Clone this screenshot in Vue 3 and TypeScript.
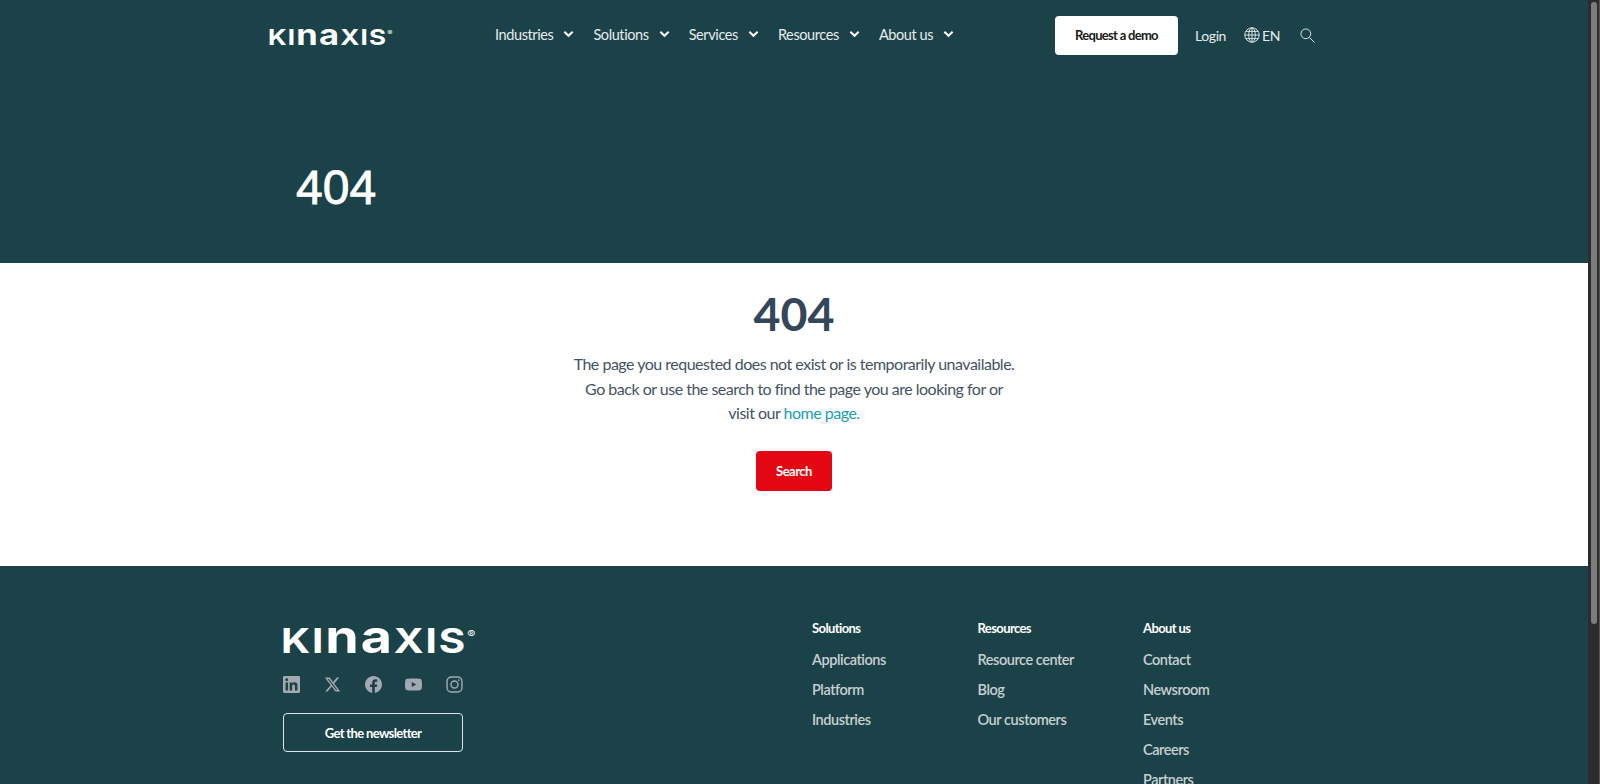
<script setup lang="ts">
interface NavItem {
  label: string
}

interface FooterColumn {
  title: string
  links: string[]
}

const navItems: NavItem[] = [
  { label: 'Industries' },
  { label: 'Solutions' },
  { label: 'Services' },
  { label: 'Resources' },
  { label: 'About us' },
]

const footerColumns: FooterColumn[] = [
  { title: 'Solutions', links: ['Applications', 'Platform', 'Industries'] },
  { title: 'Resources', links: ['Resource center', 'Blog', 'Our customers'] },
  { title: 'About us', links: ['Contact', 'Newsroom', 'Events', 'Careers', 'Partners'] },
]
</script>

<template>
  <div class="page">
    <section class="hero">
      <header class="wrap topbar">
        <a class="logo logo-small" href="#">
          <span class="cap">KI</span><span class="low">na</span><span class="cap">XIS</span><sup class="reg">®</sup>
        </a>
        <nav class="nav">
          <a v-for="item in navItems" :key="item.label" class="nav-item" href="#">
            {{ item.label }}
            <svg class="chevron" viewBox="0 0 12 8" width="11" height="8">
              <path d="M1.5 1.5 6 6l4.5-4.5" fill="none" stroke="currentColor" stroke-width="2.2" />
            </svg>
          </a>
        </nav>
        <div class="actions">
          <a class="demo" href="#">Request a demo</a>
          <a class="login" href="#">Login</a>
          <a class="lang" href="#">
            <svg viewBox="0 0 16 16" width="16" height="16" fill="none" stroke="currentColor" stroke-width="0.9">
              <circle cx="8" cy="8" r="7.2" />
              <ellipse cx="8" cy="8" rx="3.3" ry="7.2" />
              <path d="M8 .8v14.4M.8 8h14.4M1.8 4.4h12.4M1.8 11.6h12.4" />
            </svg>
            EN
          </a>
          <a class="search-icon" href="#" aria-label="Search">
            <svg viewBox="0 0 16 16" width="15" height="15" fill="none" stroke="currentColor" stroke-width="1">
              <circle cx="6.2" cy="6.2" r="5.2" />
              <path d="m10 10 5.5 5.5" />
            </svg>
          </a>
        </div>
      </header>
      <div class="wrap">
        <h1 class="hero-title">404</h1>
      </div>
    </section>

    <main class="notfound">
      <h2>404</h2>
      <p>
        The page you requested does not exist or is temporarily unavailable.<br>
        Go back or use the search to find the page you are looking for or<br>
        visit our <a href="#">home page.</a>
      </p>
      <a class="search-btn" href="#">Search</a>
    </main>

    <footer class="footer">
      <div class="wrap footer-inner">
        <div class="brand">
          <a class="logo logo-large" href="#">
            <span class="cap">KI</span><span class="low">na</span><span class="cap">XIS</span><sup class="reg">®</sup>
          </a>
          <div class="social">
            <svg viewBox="0 0 24 24" width="17" height="17" fill="currentColor">
              <path d="M20.447 20.452h-3.554v-5.569c0-1.328-.027-3.037-1.852-3.037-1.853 0-2.136 1.445-2.136 2.939v5.667H9.351V9h3.414v1.561h.046c.477-.9 1.637-1.85 3.37-1.85 3.601 0 4.267 2.37 4.267 5.455v6.286zM5.337 7.433c-1.144 0-2.063-.926-2.063-2.065 0-1.138.92-2.063 2.063-2.063 1.14 0 2.064.925 2.064 2.063 0 1.139-.925 2.065-2.064 2.065zm1.782 13.019H3.555V9h3.564v11.452zM22.225 0H1.771C.792 0 0 .774 0 1.729v20.542C0 23.227.792 24 1.771 24h20.451C23.2 24 24 23.227 24 22.271V1.729C24 .774 23.2 0 22.222 0h.003z" />
            </svg>
            <svg viewBox="0 0 24 24" width="17" height="17" fill="currentColor">
              <path d="M18.244 2.25h3.308l-7.227 8.26 8.502 11.24H16.17l-5.214-6.817L4.99 21.75H1.68l7.73-8.835L1.254 2.25H8.08l4.713 6.231zm-1.161 17.52h1.833L7.084 4.126H5.117z" />
            </svg>
            <svg viewBox="0 0 24 24" width="17" height="17" fill="currentColor">
              <path d="M24 12.073c0-6.627-5.373-12-12-12s-12 5.373-12 12c0 5.99 4.388 10.954 10.125 11.854v-8.385H7.078v-3.47h3.047V9.43c0-3.007 1.792-4.669 4.533-4.669 1.312 0 2.686.235 2.686.235v2.953H15.83c-1.491 0-1.956.925-1.956 1.874v2.25h3.328l-.532 3.47h-2.796v8.385C19.612 23.027 24 18.062 24 12.073z" />
            </svg>
            <svg viewBox="0 0 24 24" width="17" height="17" fill="currentColor">
              <path d="M23.498 6.186a3.016 3.016 0 0 0-2.122-2.136C19.505 3.545 12 3.545 12 3.545s-7.505 0-9.377.505A3.017 3.017 0 0 0 .502 6.186C0 8.07 0 12 0 12s0 3.93.502 5.814a3.016 3.016 0 0 0 2.122 2.136c1.871.505 9.376.505 9.376.505s7.505 0 9.377-.505a3.015 3.015 0 0 0 2.122-2.136C24 15.93 24 12 24 12s0-3.93-.502-5.814zM9.545 15.568V8.432L15.818 12l-6.273 3.568z" />
            </svg>
            <svg viewBox="0 0 24 24" width="17" height="17" fill="none" stroke="currentColor" stroke-width="2">
              <rect x="1.5" y="1.5" width="21" height="21" rx="6" />
              <circle cx="12" cy="12" r="5" />
              <circle cx="18.2" cy="5.8" r="1.2" fill="currentColor" stroke="none" />
            </svg>
          </div>
          <a class="newsletter" href="#">Get the newsletter</a>
        </div>
        <div class="columns">
          <div v-for="col in footerColumns" :key="col.title" class="column">
            <h3>{{ col.title }}</h3>
            <a v-for="link in col.links" :key="link" href="#">{{ link }}</a>
          </div>
        </div>
      </div>
    </footer>

    <div class="scrollbar">
      <div class="scrollbar-thumb" />
    </div>
  </div>
</template>

<style scoped>
.page {
  position: relative;
  box-sizing: border-box;
  height: 100vh;
  padding-right: 12px;
  overflow: hidden;
  font-family: Lato, "Liberation Sans", sans-serif;
  color: #445364;
}

.scrollbar {
  position: absolute;
  top: 0;
  right: 0;
  bottom: 0;
  box-sizing: border-box;
  width: 12px;
  padding: 2px 2px 0 3px;
  background: #2c2c2c;
  border-right: 1px solid #555;
}

.scrollbar-thumb {
  height: 622px;
  border-radius: 4px;
  background: #7c7c7c;
}

a {
  color: inherit;
  text-decoration: none;
}

.wrap {
  width: 1048px;
  margin: 0 auto;
}

.hero {
  height: 263px;
  background: #1b4249;
  color: #fff;
}

.topbar {
  display: flex;
  align-items: center;
  height: 70px;
}

.logo {
  display: inline-block;
  font-family: Inter, sans-serif;
  font-weight: 700;
  line-height: 1;
  color: #fff;
  white-space: nowrap;
  transform-origin: left center;
}

.logo .low {
  font-size: 1.33em;
}

.logo .reg {
  font-size: 0.3em;
  font-weight: 400;
  vertical-align: 1.5em;
  line-height: 0;
}

.logo-small {
  font-size: 22px;
  letter-spacing: 1px;
  margin-left: -2px;
  transform: scaleX(1.18);
}

.logo-large {
  font-size: 34px;
  letter-spacing: 1.6px;
  margin-left: -2px;
  transform: scaleX(1.19);
}

.topbar .logo {
  width: 227px;
  flex: none;
}

.nav {
  display: flex;
  gap: 19px;
  margin-top: -2px;
}

.nav-item {
  display: flex;
  align-items: center;
  gap: 10px;
  font-size: 14.5px;
  letter-spacing: -0.4px;
  color: #e6ecec;
}

.chevron {
  color: #fff;
}

.actions {
  display: flex;
  align-items: center;
  margin-left: auto;
  color: #e6ecec;
  font-size: 14px;
  letter-spacing: -0.4px;
}

.demo {
  display: flex;
  align-items: center;
  justify-content: center;
  width: 123px;
  height: 39px;
  border-radius: 4px;
  background: #fff;
  color: #1a1a1a;
  font-size: 13px;
  font-weight: 700;
  letter-spacing: -0.7px;
}

.login {
  margin-left: 17px;
}

.lang {
  display: flex;
  align-items: center;
  gap: 2px;
  margin-left: 18px;
}

.search-icon {
  display: flex;
  margin-left: 20px;
  margin-right: 3px;
}

.hero-title {
  margin: 91px 0 0;
  padding-left: 26px;
  font-family: "Liberation Sans", sans-serif;
  font-size: 48px;
  font-weight: 400;
  line-height: 54px;
  -webkit-text-stroke: 0.8px #fff;
}

.notfound {
  display: flex;
  flex-direction: column;
  align-items: center;
  height: 302px;
  background: #fff;
}

.notfound h2 {
  margin: 21px 0 0;
  font-size: 46.5px;
  font-weight: 700;
  line-height: 58px;
  color: #34475a;
}

.notfound p {
  margin: 10px 0 0;
  font-size: 16px;
  letter-spacing: -0.5px;
  line-height: 24.5px;
  text-align: center;
}

.notfound p a {
  color: #1a9dbb;
}

.search-btn {
  display: flex;
  align-items: center;
  justify-content: center;
  width: 76px;
  height: 40px;
  margin-top: 25px;
  border-radius: 4px;
  background: #e30613;
  color: #fff;
  font-size: 13px;
  font-weight: 700;
  letter-spacing: -0.5px;
}

.footer {
  background: #1b4249;
  margin-top: 1px;
  padding-top: 48px;
  padding-bottom: 60px;
}

.footer-inner {
  display: flex;
  padding-left: 13px;
  box-sizing: border-box;
}

.brand {
  display: flex;
  flex-direction: column;
  width: 529px;
}

.social {
  display: flex;
  justify-content: space-between;
  width: 180px;
  margin-top: 17px;
  color: #a4a8b0;
}

.newsletter {
  display: flex;
  align-items: center;
  justify-content: center;
  box-sizing: border-box;
  width: 180px;
  height: 39px;
  margin-top: 20px;
  border: 1px solid #dfe5e5;
  border-radius: 4px;
  color: #fff;
  font-size: 13px;
  font-weight: 700;
  letter-spacing: -0.65px;
}

.columns {
  display: grid;
  grid-template-columns: repeat(3, 165.5px);
  padding-top: 6px;
}

.column {
  display: flex;
  flex-direction: column;
  align-items: flex-start;
}

.column h3 {
  margin: 0 0 9px;
  font-size: 13px;
  font-weight: 700;
  letter-spacing: -0.6px;
  line-height: 16px;
  color: #fff;
}

.column a {
  font-size: 14.5px;
  font-weight: 600;
  letter-spacing: -0.45px;
  line-height: 30px;
  color: #c8cfd0;
}
</style>
